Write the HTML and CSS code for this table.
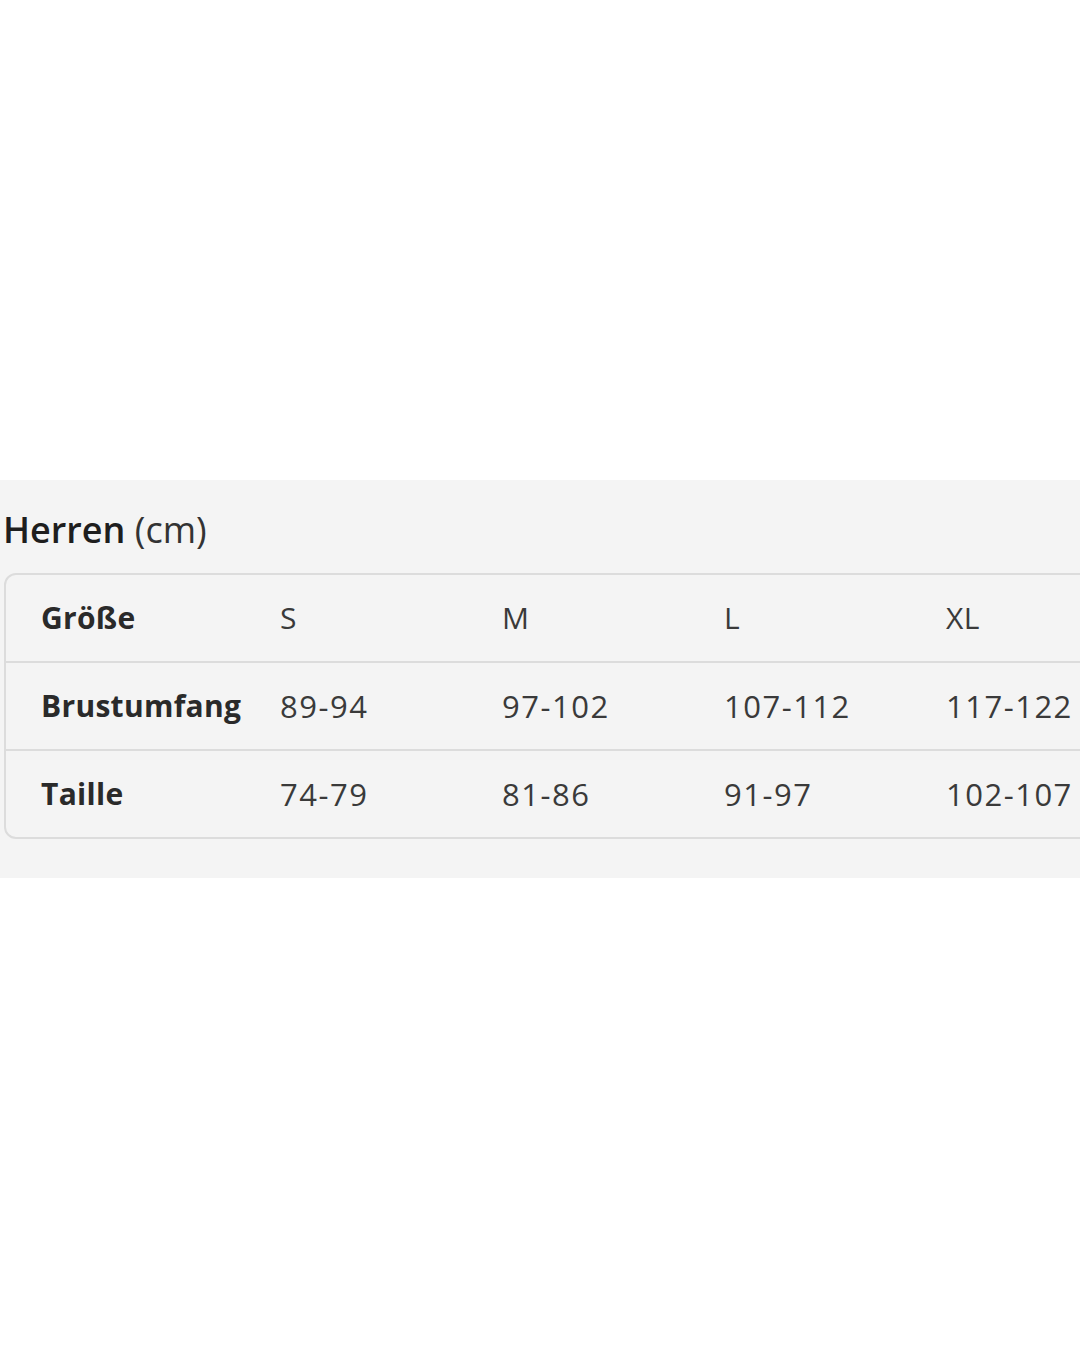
FILE: index.html
```html
<!DOCTYPE html>
<html lang="de">
<head>
<meta charset="utf-8">
<title>Herren (cm)</title>
<link rel="stylesheet" href="styles.css">
</head>
<body>
<section class="band">
  <h2 class="title">Herren <span class="unit">(cm)</span></h2>
  <div class="table">
    <div class="row">
      <div class="cell head">Größe</div>
      <div class="cell">S</div>
      <div class="cell">M</div>
      <div class="cell">L</div>
      <div class="cell">XL</div>
    </div>
    <div class="row">
      <div class="cell head">Brustumfang</div>
      <div class="cell num">89-94</div>
      <div class="cell num">97-102</div>
      <div class="cell num">107-112</div>
      <div class="cell num">117-122</div>
    </div>
    <div class="row">
      <div class="cell head">Taille</div>
      <div class="cell num">74-79</div>
      <div class="cell num">81-86</div>
      <div class="cell num">91-97</div>
      <div class="cell num">102-107</div>
    </div>
  </div>
</section>
</body>
</html>
```
FILE: styles.css
```css
html, body {
  margin: 0;
  padding: 0;
  background: #ffffff;
  overflow: hidden;
}
body {
  width: 1080px;
  height: 1350px;
  font-family: "Open Sans", "Noto Sans", sans-serif;
  color: #333;
}
.band {
  margin-top: 480px;
  height: 398px;
  background: #f4f4f4;
  padding-left: 3px;
  box-sizing: border-box;
  padding-top: 25px;
  overflow: hidden;
}
.title {
  margin: 0;
  font-size: 36px;
  font-weight: 600;
  line-height: 50px;
  color: #1e1e1e;
}
.unit {
  font-weight: 400;
  color: #333;
}
.table {
  margin-top: 18px;
  margin-left: 1px;
  width: 1200px;
  border: 2px solid #dcdcdc;
  border-radius: 12px;
}
.row {
  display: grid;
  grid-template-columns: 239px 222px 222px 222px 222px;
  padding-left: 35px;
  height: 86px;
  align-items: center;
}
.row + .row {
  border-top: 2px solid #dcdcdc;
}
.cell {
  font-size: 30px;
  color: #3a3a3a;
  white-space: nowrap;
  letter-spacing: 0.5px;
  margin-top: -1px;
}
.cell.num {
  font-size: 31px;
  letter-spacing: 1.5px;
}
.cell.head {
  font-weight: 700;
  color: #2a2a2a;
  letter-spacing: 0.3px;
}
```
